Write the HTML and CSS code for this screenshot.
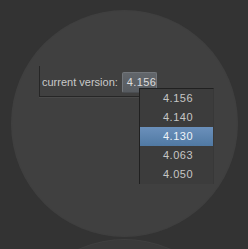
FILE: index.html
```html
<!DOCTYPE html>
<html>
<head>
<meta charset="utf-8">
<link rel="stylesheet" href="styles.css">
</head>
<body>
<div class="stage">
  <div class="disc">
    <div class="frame">
      <span class="label">current version:</span>
      <span class="button">4.156</span>
    </div>
    <ul class="menu">
      <li>4.156</li>
      <li>4.140</li>
      <li class="active">4.130</li>
      <li>4.063</li>
      <li>4.050</li>
    </ul>
  </div>
  <div class="disc next"></div>
</div>
</body>
</html>
```
FILE: styles.css
```css
html, body {
  margin: 0;
  padding: 0;
  background: #333333;
  width: 248px;
  height: 249px;
  overflow: hidden;
  font-family: "Liberation Sans", Arial, sans-serif;
  font-size: 11px;
}
.stage {
  display: flex;
  flex-direction: column;
  align-items: center;
  padding-top: 11px;
  padding-left: 1px;
  gap: 4px;
  height: 249px;
  box-sizing: border-box;
  overflow: hidden;
}
.disc {
  position: relative;
  flex: none;
  width: 225px;
  height: 225px;
  border-radius: 50%;
  background: #404040;
  box-shadow: 0 0 0 1px rgba(72,72,72,0.6);
  display: flex;
  align-items: flex-start;
}
.frame {
  margin-left: 27px;
  margin-top: 55px;
  width: 125px;
  height: 31px;
  border-left: 1px solid #262626;
  border-bottom: 1px solid #262626;
  box-shadow: 0 1px 0 #4a4a4a;
  display: flex;
  align-items: flex-end;
  padding-left: 2px;
  padding-bottom: 3px;
  box-sizing: border-box;
  gap: 4px;
}
.label {
  flex: none;
  white-space: nowrap;
  color: #c9c9c9;
  line-height: 21px;
}
.button {
  flex: none;
  width: 35px;
  height: 21px;
  box-sizing: border-box;
  background: linear-gradient(#62666b, #575b60);
  border: 1px solid #72767b;
  border-bottom-color: #4a4d51;
  border-radius: 2px;
  color: #dcdcdc;
  line-height: 19px;
  padding-left: 4px;
  letter-spacing: 0.4px;
}
.menu {
  position: absolute;
  left: 127px;
  top: 77px;
  width: 75px;
  height: 96px;
  margin: 0;
  padding: 0;
  list-style: none;
  background: #3c3c3c;
  border-top: 1px solid #202020;
  border-left: 1px solid #202020;
  border-right: 1px solid #383838;
  box-sizing: border-box;
}
.menu li {
  display: block;
  height: 19px;
  line-height: 19px;
  text-align: right;
  padding-right: 20px;
  color: #c6c6c6;
  letter-spacing: 0.5px;
}
.menu li.active {
  background: linear-gradient(#6b90bb, #5079a3);
  color: #eef3f8;
}
.disc.next {
  background: #3a3a3a;
}
```
